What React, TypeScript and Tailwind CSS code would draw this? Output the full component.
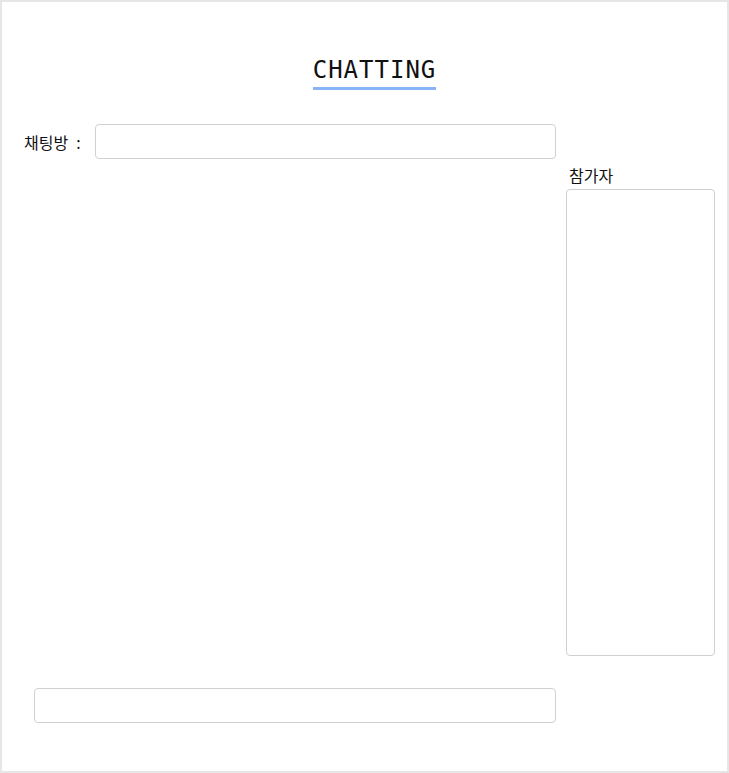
export default function App() {
  return (
    <div
      className="h-[773px] w-full border-2 border-[#e6e6e6] bg-white text-[#111]"
      style={{ fontFamily: '"Noto Sans CJK KR", "Noto Sans", sans-serif' }}
    >
      {/* 제목 */}
      <div className="flex justify-center pt-[52px] pl-[20px]">
        <h1
          className="inline-block border-b-[3px] border-[#8ab4f8] pb-[1px] text-[24px] font-normal leading-[32px] tracking-[1px]"
          style={{ fontFamily: '"DejaVu Sans Mono", monospace' }}
        >
          CHATTING
        </h1>
      </div>

      <div className="mt-[34px] grid grid-cols-[532px_149px] gap-x-[10px] pl-[22px]">
        {/* 채팅방 이름 */}
        <div className="flex items-center">
          <label htmlFor="room" className="flex w-[71px] shrink-0 text-[16px] leading-[24px]">
            채팅방<span className="ml-[8px]">:</span>
          </label>
          <input
            id="room"
            type="text"
            className="h-[35px] w-[461px] rounded-[4px] border border-[#d0d0d0] px-3 text-sm outline-none"
          />
        </div>
        <div />

        {/* 메시지 영역 (비어 있음) */}
        <div />
        <div className="mt-[4px] flex flex-col">
          <span className="pl-[3px] text-[16px] leading-[24px]">참가자</span>
          <div className="mt-[2px] h-[467px] rounded-[4px] border border-[#d0d0d0]" />
        </div>

        {/* 입력창 */}
        <div className="mt-[32px] pl-[10px]">
          <input
            type="text"
            className="h-[35px] w-[522px] rounded-[4px] border border-[#d0d0d0] px-3 text-sm outline-none"
          />
        </div>
        <div />
      </div>
    </div>
  );
}
